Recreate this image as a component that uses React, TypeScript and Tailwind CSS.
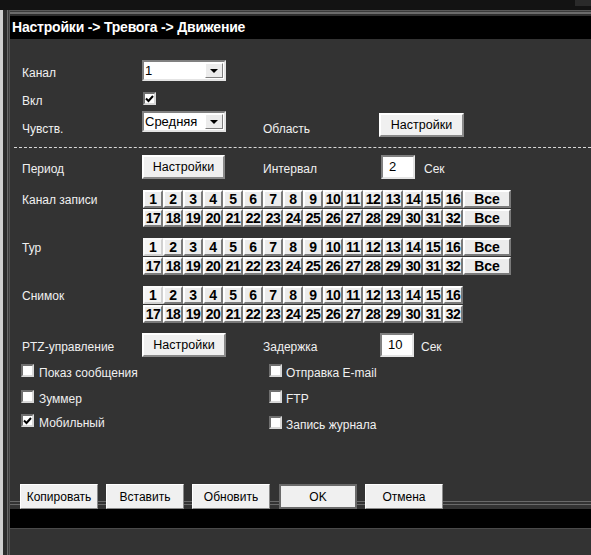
import React from 'react';

const label = "text-[12px] text-[#f0f0f0] leading-none pt-[4px]";

function Check({ checked = false }: { checked?: boolean }) {
  return (
    <div className="w-[13px] h-[13px] bg-white border-2 border-t-[#707070] border-l-[#707070] border-b-[#d8d8d8] border-r-[#d8d8d8] flex items-center justify-center shrink-0">
      {checked && (
        <svg width="9" height="8" viewBox="0 0 9 8">
          <polyline points="1,3.5 3.5,6 8,1" fill="none" stroke="#000" strokeWidth="2" />
        </svg>
      )}
    </div>
  );
}

function Select({ value }: { value: string }) {
  return (
    <div className="w-[84px] h-[21px] bg-white border-2 border-t-[#808080] border-l-[#808080] border-b-[#e4e4e4] border-r-[#e4e4e4] flex items-stretch">
      <span className="flex-1 text-[13px] text-black pl-[1px] leading-[17px]">{value}</span>
      <div className="w-[18px] my-[1px] mr-[1px] bg-[#ececec] border border-t-white border-l-white border-b-[#808080] border-r-[#808080] flex items-center justify-center">
        <svg width="8" height="4" viewBox="0 0 8 4">
          <polygon points="0,0 8,0 4,4" fill="#000" />
        </svg>
      </div>
    </div>
  );
}

function Btn({ children, w = 'w-[84px]' }: { children: React.ReactNode; w?: string }) {
  return (
    <div className={`${w} h-[24px] bg-[#f0f0f0] border-2 border-t-white border-l-white border-b-[#8a8a8a] border-r-[#8a8a8a] flex items-center justify-center text-[12.5px] text-black leading-none pt-[1px]`}>
      {children}
    </div>
  );
}

function Input({ value }: { value: string }) {
  return (
    <div className="w-[34px] h-[24px] bg-white border-2 border-t-[#808080] border-l-[#808080] border-b-[#e4e4e4] border-r-[#e4e4e4] text-[13px] text-black pl-[6px] leading-[19px]">
      {value}
    </div>
  );
}

function Cell({ n, pressed = false }: { n: string; pressed?: boolean }) {
  return (
    <div
      className={
        pressed
          ? "w-[20px] h-[18px] bg-[#f4f4f4] border-2 border-t-[#fafafa] border-l-[#fafafa] border-b-[#d0d0d0] border-r-[#d0d0d0] flex items-center justify-center text-[14px] font-bold text-black leading-none"
          : "w-[20px] h-[18px] bg-[#ececec] border-2 border-t-white border-l-white border-b-[#7a7a7a] border-r-[#7a7a7a] flex items-center justify-center text-[14px] font-bold text-black leading-none tracking-[-0.5px]"
      }
    >
      {n}
    </div>
  );
}

function AllBtn() {
  return (
    <div className="w-[48px] h-[18px] bg-[#ececec] border-2 border-t-white border-l-white border-b-[#7a7a7a] border-r-[#7a7a7a] flex items-center justify-center text-[14px] font-bold text-black leading-none">
      Все
    </div>
  );
}

function ChannelGrid({ all = true, firstPressed = false }: { all?: boolean; firstPressed?: boolean }) {
  const row1 = Array.from({ length: 16 }, (_, i) => String(i + 1));
  const row2 = Array.from({ length: 16 }, (_, i) => String(i + 17));
  return (
    <div className="flex flex-col gap-[1px]">
      <div className="flex">
        {row1.map((n, i) => (
          <Cell key={n} n={n} pressed={firstPressed && i === 0} />
        ))}
        {all && <AllBtn />}
      </div>
      <div className="flex">
        {row2.map((n) => (
          <Cell key={n} n={n} />
        ))}
        {all && <AllBtn />}
      </div>
    </div>
  );
}

export default function App() {
  return (
    <div className="w-[591px] h-[555px] bg-[#333333] overflow-hidden flex flex-col font-['Liberation_Sans',Arial,sans-serif]">
      <div className="h-[10px] bg-[#131313] shrink-0 flex justify-end">
        <div className="w-[16px] h-[6px] bg-[#2a2a2a]" />
      </div>
      <div className="flex flex-1">
        {/* left frame strips */}
        <div className="w-[3px] bg-[#d0d0d0]" />
        <div className="w-[4px] bg-[#2c2c2c]" />
        <div className="w-[1px] bg-[#6a6a6a]" />
        <div className="w-[1px] bg-[#3c3c3c]" />
        <div className="w-[1px] bg-[#555555]" />

        <div className="flex-1 flex flex-col">
          <div className="h-[1px] bg-[#5a5a5a]" />
          <div className="h-[1px] bg-[#3a3a3a]" />
          <div className="h-[2px] bg-[#6c6c6c]" />
          <div className="h-[2px] bg-[#2e2e2e]" />
          <div className="h-[23px] bg-black flex items-center pl-[2px] text-[14px] font-bold text-white tracking-[-0.2px]">
            Настройки -&gt; Тревога -&gt; Движение
          </div>

          {/* Канал */}
          <div className="mt-[21px] h-[21px] flex items-center pl-[12px]">
            <span className={`${label} w-[120px]`}>Канал</span>
            <Select value="1" />
          </div>
          {/* Вкл */}
          <div className="mt-[11px] h-[13px] flex items-center pl-[12px]">
            <span className={`${label} w-[121px]`}>Вкл</span>
            <Check checked />
          </div>
          {/* Чувств. */}
          <div className="mt-[6px] h-[26px] flex items-start pl-[12px]">
            <span className={`${label} w-[120px] mt-[8px]`}>Чувств.</span>
            <Select value="Средняя" />
            <span className={`${label} w-[116px] ml-[37px] mt-[8px]`}>Область</span>
            <div className="mt-[2px]">
              <Btn w="w-[85px]">Настройки</Btn>
            </div>
          </div>

          <div className="mt-[10px] ml-[4px] border-t border-dashed border-[#d8d8d8]" />

          {/* Период */}
          <div className="mt-[7px] h-[24px] flex items-center pl-[12px]">
            <span className={`${label} w-[120px]`}>Период</span>
            <Btn w="w-[83px]">Настройки</Btn>
            <span className={`${label} w-[118px] ml-[38px]`}>Интервал</span>
            <Input value="2" />
            <span className={`${label} ml-[9px]`}>Сек</span>
          </div>

          {/* Канал записи */}
          <div className="mt-[11px] flex items-start pl-[12px]">
            <span className={`${label} w-[121px]`}>Канал записи</span>
            <ChannelGrid />
          </div>
          {/* Тур */}
          <div className="mt-[11px] flex items-start pl-[12px]">
            <span className={`${label} w-[121px]`}>Тур</span>
            <ChannelGrid firstPressed />
          </div>
          {/* Снимок */}
          <div className="mt-[11px] flex items-start pl-[12px]">
            <span className={`${label} w-[121px]`}>Снимок</span>
            <ChannelGrid all={false} firstPressed />
          </div>

          {/* PTZ */}
          <div className="mt-[10px] h-[24px] flex items-center pl-[12px]">
            <span className={`${label} w-[120px]`}>PTZ-управление</span>
            <Btn w="w-[84px]">Настройки</Btn>
            <span className={`${label} w-[117px] ml-[37px]`}>Задержка</span>
            <Input value="10" />
            <span className={`${label} ml-[7px]`}>Сек</span>
          </div>

          {/* checkboxes */}
          <div className="mt-[7px] flex pl-[11px]">
            <div className="w-[248px] flex flex-col gap-[13px]">
              <div className="flex items-center gap-[5px] h-[13px]">
                <Check />
                <span className={label}>Показ сообщения</span>
              </div>
              <div className="flex items-center gap-[5px] h-[13px]">
                <Check />
                <span className={label}>Зуммер</span>
              </div>
              <div className="flex items-center gap-[5px] h-[13px] -mt-[2px]">
                <Check checked />
                <span className={label}>Мобильный</span>
              </div>
            </div>
            <div className="flex flex-col gap-[13px]">
              <div className="flex items-center gap-[4px] h-[13px]">
                <Check />
                <span className={label}>Отправка E-mail</span>
              </div>
              <div className="flex items-center gap-[4px] h-[13px]">
                <Check />
                <span className={label}>FTP</span>
              </div>
              <div className="flex items-center gap-[4px] h-[13px]">
                <Check />
                <span className={label}>Запись журнала</span>
              </div>
            </div>
          </div>

          {/* bottom buttons */}
          <div className="mt-[55px] relative h-[25px]">
            <div className="absolute left-0 right-0 top-[17px] h-[1px] bg-[#6a6a6a]" />
            <div className="absolute left-0 right-0 top-[20px] h-[1px] bg-[#6a6a6a]" />
            <div className="relative flex gap-[8px] pl-[10px]">
              {['Копировать', 'Вставить', 'Обновить'].map((t) => (
                <div key={t} className="w-[78px] h-[25px] bg-[#f0f0f0] border border-t-white border-l-white border-b-[#8a8a8a] border-r-[#8a8a8a] flex items-center justify-center text-[12px] text-black leading-none pt-[1px]">
                  {t}
                </div>
              ))}
              <div className="w-[78px] h-[25px] ml-[1px] bg-[#f0f0f0] border-2 border-[#6a6a6a] flex items-center justify-center text-[12px] text-black leading-none pt-[1px]">
                OK
              </div>
              <div className="w-[78px] h-[25px] bg-[#f0f0f0] border border-t-white border-l-white border-b-[#8a8a8a] border-r-[#8a8a8a] flex items-center justify-center text-[12px] text-black leading-none pt-[1px]">
                Отмена
              </div>
            </div>
          </div>
          <div className="h-[19px] bg-black" />
          <div className="h-[1px] bg-[#4a4a4a]" />
        </div>
      </div>
    </div>
  );
}
